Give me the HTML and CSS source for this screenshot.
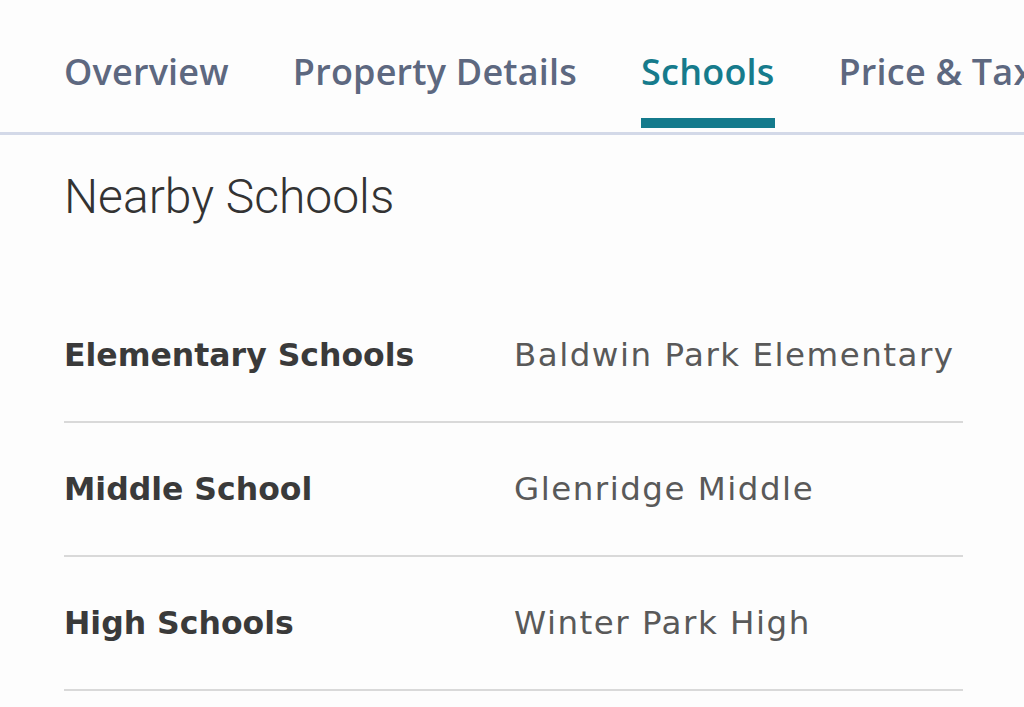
FILE: index.html
```html
<!DOCTYPE html>
<html lang="en">
<head>
<meta charset="utf-8">
<title>Nearby Schools</title>
<link rel="stylesheet" href="styles.css">
</head>
<body>
  <nav class="tabs">
    <a class="tab">Overview</a>
    <a class="tab">Property Details</a>
    <a class="tab tab--active">Schools</a>
    <a class="tab">Price &amp; Tax</a>
  </nav>
  <main class="content">
    <h2 class="heading">Nearby Schools</h2>
    <div class="rows">
      <div class="row">
        <div class="label">Elementary Schools</div>
        <div class="value">Baldwin Park Elementary</div>
      </div>
      <div class="row">
        <div class="label">Middle School</div>
        <div class="value">Glenridge Middle</div>
      </div>
      <div class="row">
        <div class="label">High Schools</div>
        <div class="value">Winter Park High</div>
      </div>
    </div>
  </main>
</body>
</html>
```

FILE: styles.css
```css
html, body {
  margin: 0;
  padding: 0;
  background: #fdfdfd;
}

body {
  width: 1024px;
  height: 707px;
  overflow: hidden;
  font-family: "Open Sans", "Noto Sans", sans-serif;
}

.tabs {
  display: flex;
  gap: 64px;
  padding-left: 64px;
  border-bottom: 3px solid #d3d9e8;
  white-space: nowrap;
  overflow: hidden;
}

.tab {
  display: flex;
  flex-direction: column;
  padding: 48px 0 4px;
  font-size: 36px;
  line-height: 48px;
  font-weight: 600;
  letter-spacing: 0.2px;
  color: #5d6880;
  flex-shrink: 0;
}

.tab::after {
  content: "";
  display: block;
  height: 10px;
  margin-top: 22px;
  background: transparent;
}

.tab--active {
  color: #167b8c;
}

.tab--active::after {
  background: #147a8c;
}

.content {
  padding: 0 61px 0 64px;
}

.heading {
  margin: 34px 0 0;
  font-family: "Roboto", sans-serif;
  font-weight: 300;
  font-size: 48px;
  line-height: 56px;
  color: #333333;
}

.rows {
  margin-top: 64px;
}

.row {
  display: grid;
  grid-template-columns: 450px 1fr;
  align-items: baseline;
  padding: 46px 0 46px;
  border-bottom: 2px solid #d9d9d9;
  font-family: "DejaVu Sans", sans-serif;
  line-height: 40px;
}

.label {
  font-size: 31.5px;
  font-weight: 700;
  color: #3a3a3a;
}

.value {
  font-size: 32.5px;
  font-weight: 400;
  letter-spacing: 1.5px;
  color: #595959;
}
```
